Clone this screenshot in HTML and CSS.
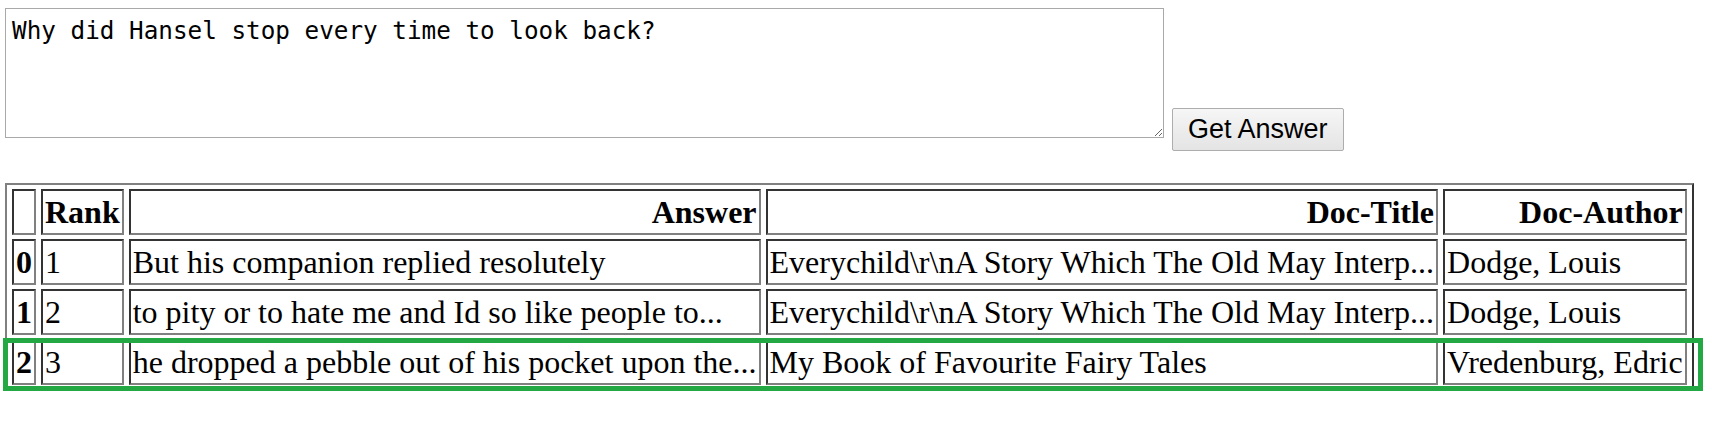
FILE: index.html
```html
<!DOCTYPE html>
<html>
<head>
<meta charset="utf-8">
<link rel="stylesheet" href="styles.css">
</head>
<body>
<div class="page">
  <div class="ask">
    <textarea class="question">Why did Hansel stop every time to look back?</textarea>
    <button class="get-answer">Get Answer</button>
  </div>
  <table class="results" border="1">
    <thead>
      <tr class="head-row">
        <th></th>
        <th>Rank</th>
        <th>Answer</th>
        <th>Doc-Title</th>
        <th>Doc-Author</th>
      </tr>
    </thead>
    <tbody>
      <tr>
        <th>0</th>
        <td>1</td>
        <td>But his companion replied resolutely</td>
        <td>Everychild\r\nA Story Which The Old May Interp...</td>
        <td>Dodge, Louis</td>
      </tr>
      <tr>
        <th>1</th>
        <td>2</td>
        <td>to pity or to hate me and Id so like people to...</td>
        <td>Everychild\r\nA Story Which The Old May Interp...</td>
        <td>Dodge, Louis</td>
      </tr>
      <tr>
        <th>2</th>
        <td>3</td>
        <td>he dropped a pebble out of his pocket upon the...</td>
        <td>My Book of Favourite Fairy Tales</td>
        <td>Vredenburg, Edric</td>
      </tr>
    </tbody>
  </table>
  <div class="highlight"></div>
</div>
</body>
</html>
```
FILE: styles.css
```css
html, body {
  margin: 0;
  padding: 0;
  background: #ffffff;
}

.page {
  position: relative;
  padding: 8px 0 0 5px;
  font-family: "Liberation Serif", "Times New Roman", serif;
  font-size: 32px;
  color: #000;
}

.ask {
  display: flex;
  align-items: flex-start;
  gap: 8px;
}

.question {
  box-sizing: border-box;
  width: 1159px;
  height: 130px;
  margin: 0;
  padding: 7px 6px 4px;
  border: 1px solid #a9a9a9;
  font-family: "DejaVu Sans Mono", monospace;
  font-size: 24.3px;
  line-height: 1.2;
  color: #000;
  background: #fff;
}

.get-answer {
  box-sizing: border-box;
  margin-top: 100px;
  height: 43px;
  padding: 0 15px;
  border: 1px solid #adadad;
  border-radius: 2px;
  background: linear-gradient(#f6f6f6, #e4e4e4);
  font-family: "Liberation Sans", Arial, sans-serif;
  font-size: 27px;
  color: #000;
}

.results {
  margin-top: 32px;
  border-collapse: separate;
  border-spacing: 5px 4px;
  border-width: 2px;
  border-style: solid;
  border-color: #808080 #333333 #333333 #808080;
}

.results th,
.results td {
  border-width: 2px;
  border-style: solid;
  border-color: #333333 #808080 #808080 #333333;
  padding: 2px;
  line-height: 38px;
  white-space: nowrap;
}

.results td {
  text-align: left;
}

.head-row th {
  text-align: right;
}

.highlight {
  position: absolute;
  left: 3px;
  top: 338px;
  width: 1700px;
  height: 53px;
  box-sizing: border-box;
  border: 5px solid #24a844;
  pointer-events: none;
}
```
